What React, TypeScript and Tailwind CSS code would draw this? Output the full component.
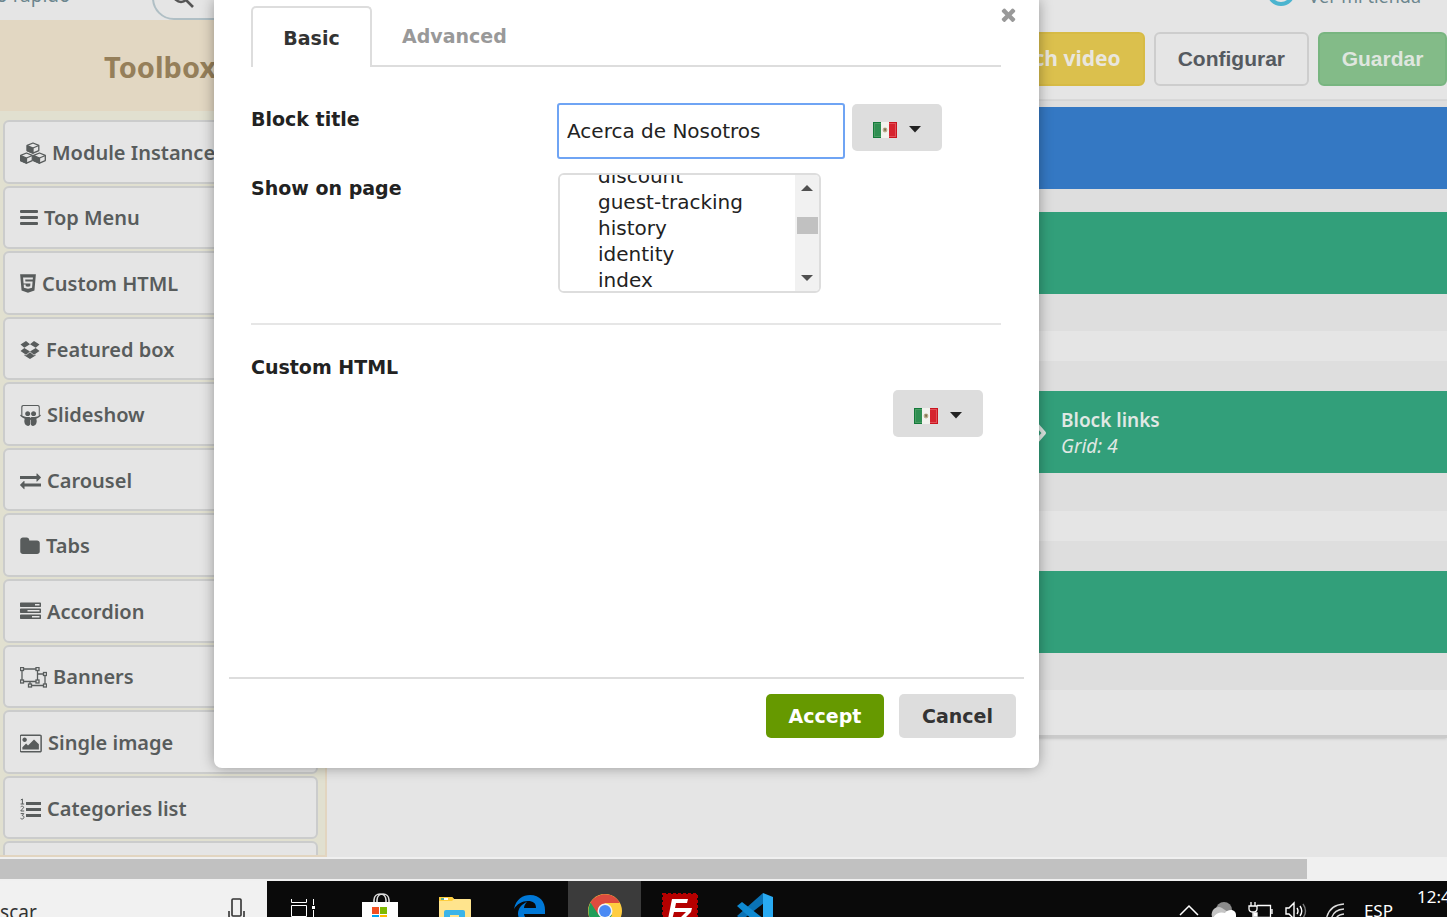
import { useEffect, useRef, type ReactNode } from "react";
import { FaHtml5, FaSlideshare } from "react-icons/fa";

const Cubes = () => (
  <svg width="26" height="22" viewBox="0 0 26 22" fill="none" stroke="currentColor" strokeWidth="1.3" strokeLinejoin="round">
    {[[13, 1], [6.5, 11], [19.5, 11]].map(([x, y]) => (
      <g key={`${x}-${y}`} transform={`translate(${x} ${y})`}>
        <path d="M0 0 5.8 2.4V7.6L0 10.2-5.8 7.6V2.4Z" fill="#e5e5e5" />
        <path d="M-5.8 2.6 0 5V10.2L-5.8 7.6Z" fill="currentColor" />
        <path d="M0 5 5.8 2.5" />
      </g>
    ))}
  </svg>
);

const Bars = () => (
  <svg width="18" height="18" viewBox="0 0 18 18" fill="currentColor">
    <rect y="1" width="18" height="3" rx="1" />
    <rect y="7" width="18" height="3" rx="1" />
    <rect y="13" width="18" height="3" rx="1" />
  </svg>
);

const Dropbox = () => (
  <svg width="20" height="18" viewBox="0 0 20 18" fill="currentColor">
    <path d="M6 0 10 3.3 4.3 6.7.5 3.6ZM14 0 19.5 3.6 15.7 6.7 10 3.3ZM4.3 6.9 10 10.4 6 13.7.5 10.1ZM15.7 6.9 19.5 10.1 14 13.7 10 10.4ZM10 11.2 14 14.5 15.6 13.4V14.6L10 18 4.4 14.6V13.4L6 14.5Z" />
  </svg>
);

const Exchange = () => (
  <svg width="21" height="21" viewBox="0 0 1792 1792" fill="currentColor">
    <path d="M1792 1184v192q0 13-9.5 22.5t-22.5 9.5h-1376v192q0 13-9.5 22.5t-22.5 9.5q-12 0-24-10l-319-320q-9-9-9-22 0-14 9-23l320-320q9-9 23-9 13 0 22.5 9.5t9.5 22.5v192h1376q13 0 22.5 9.5t9.5 22.5zm0-544q0 14-9 23l-320 320q-9 9-23 9-13 0-22.5-9.5t-9.5-22.5v-192h-1376q-13 0-22.5-9.5t-9.5-22.5v-192q0-13 9.5-22.5t22.5-9.5h1376v-192q0-14 9-23t23-9q12 0 24 10l319 319q9 9 9 23z" />
  </svg>
);

const Folder = () => (
  <svg width="20" height="21" viewBox="64 0 1664 1792" fill="currentColor">
    <path d="M1728 608v704q0 92-66 158t-158 66h-1216q-92 0-158-66t-66-158v-960q0-92 66-158t158-66h320q92 0 158 66t66 158v32h672q92 0 158 66t66 158z" />
  </svg>
);

const Tasks = () => (
  <svg width="21" height="21" viewBox="0 0 1792 1792" fill="currentColor">
    <path d="M1024 1408h640v-128h-640v128zm-384-512h1024v-128h-1024v128zm640-512h384v-128h-384v128zm512 832v256q0 26-19 45t-45 19h-1664q-26 0-45-19t-19-45v-256q0-26 19-45t45-19h1664q26 0 45 19t19 45zm0-512v256q0 26-19 45t-45 19h-1664q-26 0-45-19t-19-45v-256q0-26 19-45t45-19h1664q26 0 45 19t19 45zm0-512v256q0 26-19 45t-45 19h-1664q-26 0-45-19t-19-45v-256q0-26 19-45t45-19h1664q26 0 45 19t19 45z" />
  </svg>
);

const ObjectGroup = () => (
  <svg width="27" height="21" viewBox="0 0 27 21" fill="none" stroke="currentColor" strokeWidth="1.3">
    <path d="M2 2H17.5V14.5H2ZM17.5 7H25V18.5H10V14.5" />
    {[[2, 2], [17.5, 2], [2, 14.5], [17.5, 14.5], [25, 7], [25, 18.5], [10, 18.5]].map(([x, y]) => (
      <rect key={`${x}-${y}`} x={x - 1.5} y={y - 1.5} width="3" height="3" fill="#e5e5e5" />
    ))}
  </svg>
);

const Picture = () => (
  <svg width="22" height="21" viewBox="0 0 1856 1792" fill="currentColor">
    <path d="M576 576q0 80-56 136t-136 56-136-56-56-136 56-136 136-56 136 56 56 136zm1024 384v448h-1408v-192l320-320 160 160 512-512zm96-704h-1600q-13 0-22.5 9.5t-9.5 22.5v1216q0 13 9.5 22.5t22.5 9.5h1600q13 0 22.5-9.5t9.5-22.5v-1216q0-13-9.5-22.5t-22.5-9.5zm160 32v1216q0 66-47 113t-113 47h-1600q-66 0-113-47t-47-113v-1216q0-66 47-113t113-47h1600q66 0 113 47t47 113z" />
  </svg>
);

const ListOl = () => (
  <svg width="21" height="22" viewBox="0 0 21 22" fill="currentColor">
    <path d="M6 4h15v3H6zM6 10h15v3H6zM6 16h15v3H6z" />
    <path
      d="M.8 2 2.4 1V6M.6 6H4.2M.7 8.8C1.6 7.8 3.8 8 3.6 9.6 3.4 10.8.9 11.6.8 13H4.2M.7 15.6H3.8L2.2 17.6C4.6 17.6 4.4 21 2.2 21 1.4 21 .9 20.7.5 20.3"
      fill="none"
      stroke="currentColor"
    />
  </svg>
);

const tools: { label: string; icon: ReactNode }[] = [
  { label: "Module Instance", icon: <Cubes /> },
  { label: "Top Menu", icon: <Bars /> },
  { label: "Custom HTML", icon: <FaHtml5 className="-mx-px h-[21px] w-[18px]" /> },
  { label: "Featured box", icon: <Dropbox /> },
  { label: "Slideshow", icon: <FaSlideshare className="size-[21px]" /> },
  { label: "Carousel", icon: <Exchange /> },
  { label: "Tabs", icon: <Folder /> },
  { label: "Accordion", icon: <Tasks /> },
  { label: "Banners", icon: <ObjectGroup /> },
  { label: "Single image", icon: <Picture /> },
  { label: "Categories list", icon: <ListOl /> },
  { label: "Products list", icon: <Bars /> },
];

const pages = [
  "address", "addresses", "authentication", "best-sales", "cart", "category", "cms", "contact", "discount",
  "guest-tracking", "history", "identity", "index", "manufacturer", "my-account", "new-products", "order",
  "order-detail", "pagenotfound", "password", "prices-drop", "product", "search", "sitemap", "stores",
  "supplier",
];

function Header() {
  return (
    <header className="flex h-5 shrink-0 items-end overflow-hidden bg-[#e5e5e5] text-[#6c868e]">
      <div className="flex h-[60px] w-full items-end">
        <div className="flex h-full w-[152px] shrink-0 justify-start">
          <a href="#quick" className="-ml-[54px] mt-[23px] text-[19px] leading-6 whitespace-nowrap">Acceso rápido</a>
        </div>
        <div className="flex h-11 w-[400px] rounded-full border-2 border-[#b0bfc5] pt-2 pl-[18px]">
          <svg width="24" height="24" viewBox="0 0 24 24" fill="none" stroke="#555" strokeWidth="2.6">
            <circle cx="9" cy="9" r="7" />
            <path d="m14 14 7 7" />
          </svg>
        </div>
        <a href="#shop" className="mr-[26px] ml-auto flex h-full items-start gap-3.5">
          <svg width="28" height="28" viewBox="0 0 28 28" className="mt-[18px]">
            <circle cx="14" cy="14" r="12" fill="none" stroke="#4bb4cf" strokeWidth="4" />
          </svg>
          <span className="mt-6 text-[18px] leading-6">Ver mi tienda</span>
        </a>
      </div>
    </header>
  );
}

function Toolbox() {
  return (
    <aside className="flex w-[327px] shrink-0 flex-col overflow-hidden border-r-2 border-b-2 border-[#e2d5c0] bg-[#e1e0d0]">
      <h2 className="flex h-[91px] shrink-0 items-center bg-[#e2d7c2] pl-[104px] text-[29px] font-bold text-[#957f5a]">
        <span className="pt-0.5">Toolbox</span>
      </h2>
      <ul className="mt-[9px] mr-[7px] ml-[3px] grid h-[785px] shrink-0 auto-rows-fr gap-0.5">
        {tools.map((t) => (
          <li key={t.label} className="flex">
            <button className="flex w-full items-center gap-1.5 rounded-md border-2 border-[#cbcccc] bg-[#e5e5e5] pt-0.5 pl-[15px] text-[20px] font-semibold text-[#585c5c]">
              {t.icon}
              <span className="whitespace-nowrap">{t.label}</span>
            </button>
          </li>
        ))}
      </ul>
    </aside>
  );
}

function Canvas() {
  return (
    <main className="flex min-w-0 flex-1 flex-col overflow-hidden bg-[#e5e5e5]">
      <div className="flex h-[81px] shrink-0 items-start justify-end gap-[9px] border-b-2 border-[#d9d9d9] pt-3 text-[21px] font-bold">
        <button className="h-[54px] rounded-md border-2 border-[#d7bb45] bg-[#dbc04d] px-[22px] text-[#e9e6dd]">Watch video</button>
        <button className="h-[54px] rounded-md border-2 border-[#cdcdcd] px-[22px] font-['Liberation_Sans',sans-serif] text-[#555a60]">Configurar</button>
        <button className="h-[54px] w-[129px] rounded-md border-2 border-[#78b580] bg-[#83bb88] font-['Liberation_Sans',sans-serif] text-[#dfe6df]">Guardar</button>
      </div>
      <div className="shrink-0 border-b-3 border-[#cacaca] bg-[#dedede] pt-1.5 shadow-sm">
        <div className="h-[82px] bg-[#3478c3]" />
        <div className="mt-[23px] h-[82px] bg-[#329f7a]" />
        <div className="mt-[37px] h-[30px] bg-[#e5e5e5]" />
        <div className="mt-[30px] flex h-[82px] items-center gap-3.5 bg-[#329f7a] pt-0.5 pl-[696px] text-[#e0e8e4]">
          <svg width="24" height="24" viewBox="0 0 24 24" fill="none" stroke="currentColor" strokeWidth="4" strokeLinecap="round" strokeLinejoin="round" className="shrink-0">
            <path d="M14 4 21 12 14 20" />
          </svg>
          <div className="text-[19px] leading-[26px]">
            <p className="font-semibold">Block links</p>
            <p className="italic">Grid: 4</p>
          </div>
        </div>
        <div className="mt-[38px] h-[30px] bg-[#e5e5e5]" />
        <div className="mt-[30px] h-[82px] bg-[#329f7a]" />
        <div className="mt-[37px] h-[45px] bg-[#e5e5e5]" />
      </div>
    </main>
  );
}

function LanguageButton({ label }: { label: string }) {
  return (
    <button aria-label={label} className="flex h-[47px] w-[90px] items-center justify-center gap-3 rounded-[5px] bg-[#ddd] pt-1">
      <svg width="24" height="16" viewBox="0 0 24 16">
        <rect width="24" height="16" fill="#f2f2ee" />
        <rect width="8" height="16" fill="#137a3a" />
        <rect x="1" y="1" width="7" height="14" fill="#4a9c63" />
        <rect x="2" y="2" width="6" height="12" fill="#2f8f52" />
        <rect x="16" width="8" height="16" fill="#c9141e" />
        <rect x="16" y="1" width="7" height="14" fill="#e05058" />
        <rect x="16" y="2" width="6" height="12" fill="#d6232e" />
        <circle cx="12" cy="8" r="2.4" fill="#b9ac8c" />
        <path d="M11 6.5 12.8 6.6 13 8.6 11.6 9Z" fill="#76694a" />
      </svg>
      <svg width="12" height="7" viewBox="0 0 12 7" fill="#222">
        <path d="M0 0H12L6 6.5Z" />
      </svg>
    </button>
  );
}

function PageSelect() {
  const ref = useRef<HTMLSelectElement>(null);
  useEffect(() => {
    if (ref.current) ref.current.scrollTop = 8 * 26 + 11;
  }, []);
  return (
    <div className="flex h-[120px] w-[263px] overflow-hidden rounded-md border-2 border-[#ddd]">
      <select
        id="show-on"
        ref={ref}
        multiple
        className="h-full min-w-0 flex-1 [scrollbar-width:none] overflow-y-scroll bg-white p-0 text-[20px] text-[#222] outline-none"
      >
        {pages.map((p) => (
          <option key={p} className="h-[26px] p-0 pl-[38px] leading-[26px]">{p}</option>
        ))}
      </select>
      <div aria-hidden="true" className="flex w-6 flex-col items-center justify-between bg-[#f1f1f1] py-2.5">
        <svg width="12" height="6" viewBox="0 0 12 6" fill="#505050"><path d="M0 6H12L6 0Z" /></svg>
        <div className="-mt-4 h-[17px] w-[21px] bg-[#c1c1c1]" />
        <svg width="12" height="6" viewBox="0 0 12 6" fill="#505050"><path d="M0 0H12L6 6Z" /></svg>
      </div>
    </div>
  );
}

function BlockDialog() {
  return (
    <section
      role="dialog"
      aria-label="Block settings"
      className="relative flex h-[768px] w-[825px] flex-col rounded-b-lg bg-white font-['DejaVu_Sans',Verdana,sans-serif] text-[19px] text-[#222] shadow-[0_0_14px_rgba(0,0,0,0.35)]"
    >
      <button aria-label="Close" className="absolute top-[7px] right-[23px] text-[#999]">
        <svg width="15" height="15" viewBox="302 238 1188 1316" fill="currentColor">
          <path d="M1490 1322q0 40-28 68l-136 136q-28 28-68 28t-68-28l-294-294-294 294q-28 28-68 28t-68-28l-136-136q-28-28-28-68t28-68l294-294-294-294q-28-28-28-68t28-68l136-136q28-28 68-28t68 28l294 294 294-294q28-28 68-28t68 28l136 136q28 28 28 68t-28 68l-294 294 294 294q28 28 28 68z" />
        </svg>
      </button>
      <div className="mr-[38px] ml-[37px] flex pt-1.5 font-bold">
        <button className="h-[61px] w-[121px] rounded-t-[5px] border-2 border-b-0 border-[#ddd] pt-0.5 text-[#333]">Basic</button>
        <div className="flex flex-1 border-b-2 border-[#ddd]">
          <button className="px-[30px] pt-0.5 text-[#999]">Advanced</button>
        </div>
      </div>
      <div className="mx-[37px] mt-9 grid grid-cols-[307px_1fr] items-start gap-y-3.5">
        <label htmlFor="title" className="pt-1 leading-6 font-bold">Block title</label>
        <div className="flex gap-[7px]">
          <input
            id="title"
            defaultValue="Acerca de Nosotros"
            className="-ml-px h-14 w-[288px] rounded-[3px] border-2 border-[#6fa4f4] px-2 text-[20px] text-[#222] outline-none"
          />
          <div className="pt-px">
            <LanguageButton label="Title language" />
          </div>
        </div>
        <label htmlFor="show-on" className="pt-[3px] leading-6 font-bold">Show on page</label>
        <PageSelect />
      </div>
      <hr className="mr-[38px] ml-[37px] mt-[30px] border-t-2 border-[#e6e6e6]" />
      <h3 className="mx-[37px] mt-[30px] leading-6 font-bold">Custom HTML</h3>
      <div className="mr-14 mt-[11px] flex justify-end">
        <LanguageButton label="HTML language" />
      </div>
      <footer className="mx-[15px] mt-auto mb-[30px] flex justify-end gap-[15px] border-t-2 border-[#ddd] pt-[15px] pr-2 font-bold">
        <button className="h-11 w-[118px] rounded-[5px] bg-[#690] text-white">Accept</button>
        <button className="h-11 w-[117px] rounded-[5px] bg-[#ddd] text-[#333]">Cancel</button>
      </footer>
    </section>
  );
}

const taskIcons: { name: string; active?: boolean; icon: ReactNode }[] = [
  {
    name: "Task view",
    icon: (
      <svg width="26" height="28" viewBox="0 0 26 28" fill="none" stroke="#fff" className="mr-1">
        <path d="M1.5 2V5.5H16.5V2M1.5 8.5H16.5V19.5H1.5ZM1.5 26V22.5H16.5V26M23.5 2V8M23.5 13V26" />
        <rect x="22" y="9" width="3" height="3" fill="#fff" stroke="none" />
      </svg>
    ),
  },
  {
    name: "Store",
    icon: (
      <svg width="36" height="38" viewBox="0 0 36 38">
        <path d="M12 12V8C12 0 24 0 24 8V12M15 12V8C15 0 27 0 27 8V12" fill="none" stroke="#ddd" strokeWidth="1.6" />
        <path d="M0 10H36V38H0Z" fill="#fff" />
        <path d="M10 15H17V22H10Z" fill="#f25022" />
        <path d="M18 15H25V22H18Z" fill="#7fba00" />
        <path d="M10 23H17V30H10Z" fill="#00a4ef" />
        <path d="M18 23H25V30H18Z" fill="#ffb900" />
      </svg>
    ),
  },
  {
    name: "File Explorer",
    icon: (
      <svg width="32" height="28" viewBox="0 0 32 28">
        <path d="M0 1Q0 0 1 0H13L15 2H31Q32 2 32 3V28H0Z" fill="#ffe48d" />
        <path d="M0 4V1Q0 0 1 0H13L15 2 13 4Z" fill="#ffce3d" />
        <path d="M2 1H9V3H2Z" fill="#fff" />
        <path d="M2 1H5V3H2Z" fill="#5aad9a" />
        <path d="M5 15Q5 13 7 13H24Q26 13 26 15V28H5Z" fill="#3bb4e8" />
        <path d="M11 18H20V21H11Z" fill="#ffe48d" />
      </svg>
    ),
  },
  {
    name: "Edge",
    icon: (
      <svg width="31" height="32" viewBox="0 0 31 32" fill="#0078d7">
        <path d="M0 14C2 4 9 0 16 0 26 0 31 7 31 15V19H10C11 27 22 28 29 24V30C18 35 5 31 4 19 4 13 8 9 13 7 11 9 10 11 10 13H22C22 8 19 6 14 6 8 6 3 9 0 14Z" />
      </svg>
    ),
  },
  {
    name: "Chrome",
    active: true,
    icon: (
      <svg width="34" height="34" viewBox="0 0 34 34">
        <circle cx="17" cy="17" r="17" fill="#ffcd40" />
        <path d="M17 17 24 21 16 34C3 33-3 20 2.5 8.5Z" fill="#1f9d58" />
        <path d="M2.5 8.5C10-3 26-2 31.8 9H17L10 20Z" fill="#dd4b3e" />
        <circle cx="17" cy="17" r="7.5" fill="#f3f3f3" />
        <circle cx="17" cy="17" r="6" fill="#4a8af4" />
      </svg>
    ),
  },
  {
    name: "FileZilla",
    icon: (
      <svg width="36" height="36" viewBox="0 0 36 36">
        <rect x="1" y="1" width="34" height="34" fill="#b50000" stroke="#b50000" strokeWidth="2" strokeDasharray="3 2" />
        <path d="M10 6H26L25 10H14L13 15H22L21 19H12L9 31H5Z" fill="#fff" />
        <path d="M18 15H30L29 19 20 28H28L27 31H15L16 27 24 19H17Z" fill="#fff" />
      </svg>
    ),
  },
  {
    name: "Visual Studio Code",
    icon: (
      <svg width="36" height="36" viewBox="0 0 36 36">
        <path d="M26 0 27 10 5 27 0 23Z" fill="#0a72b5" />
        <path d="M0 13 5 9 27 26 26 36Z" fill="#0f8ad2" />
        <path d="M26 0 36 4V32L26 36Z" fill="#29aaf2" />
      </svg>
    ),
  },
];

function Taskbar() {
  return (
    <nav className="h-9 shrink-0 overflow-hidden bg-[#0a0a0a] text-white">
      <div className="flex h-[60px]">
        <label className="flex w-[267px] shrink-0 items-center justify-between overflow-hidden bg-[#f1f1f1] pr-[22px] text-[#333]">
          <span className="-ml-6 pt-0.5 text-[19px]">Buscar</span>
          <svg width="17" height="26" viewBox="0 0 17 26" fill="none" stroke="#333" strokeWidth="1.6">
            <rect x="4" y="1" width="9" height="17" rx="1" />
            <path d="M1 13V18Q1 21 4 21H13Q16 21 16 18V13M8.5 21V25" />
          </svg>
        </label>
        {taskIcons.map((t) => (
          <div key={t.name} className="flex w-[75px] shrink-0 justify-center">
            <button
              aria-label={t.name}
              className={t.active ? "flex w-[73px] items-center justify-center bg-[#3b3b3b]" : "flex w-[73px] items-center justify-center"}
            >
              {t.icon}
            </button>
          </div>
        ))}
        <div className="ml-auto flex items-center gap-3">
          <svg width="20" height="14" viewBox="0 0 20 14" fill="none" stroke="#fff" strokeWidth="1.5"><path d="M1 11 10 2 19 11" /></svg>
          <svg width="25" height="18" viewBox="0 0 25 18">
            <circle cx="13" cy="8" r="8" fill="#8b8b8b" />
            <path d="M1 15C-1 8 6 3 11 6L20 12 18 17Z" fill="#c4c4c4" />
            <path d="M2 18C2 12 9 9 14 11 18 6 25 8 25 13V18Z" fill="#fff" />
          </svg>
          <svg width="25" height="20" viewBox="0 0 25 20" fill="none" stroke="#fff" strokeWidth="1.3">
            <path d="M9 4.5H22.5V16.5H5V13M24 8V13M3 1V5M7 1V5M1 5H9V8Q9 11 5 11 1 11 1 8ZM5 11V16" />
            <path d="M6 15V12H9V15Z" fill="#fff" />
          </svg>
          <svg width="23" height="20" viewBox="0 0 23 20" fill="none" stroke="#fff" strokeWidth="1.4">
            <path d="M1 7H4L9 2V18L4 13H1ZM12 7Q14 10 12 13M15 5Q18.500 10 15 15" />
            <path d="M18 3Q23 10 18 17" stroke="#777" />
          </svg>
          <svg width="28" height="20" viewBox="0 0 28 20" fill="none" stroke="#ddd" strokeWidth="1.3" className="mr-1">
            <path d="M6 20Q8 4 24 3M11 20Q12 9 24 8M15 20Q16 14 24 13" />
            <path d="M20 20Q21 18 24 18" />
          </svg>
          <span className="text-[17px]">ESP</span>
          <div className="ml-3 w-[30px] overflow-hidden text-[17px] leading-7 whitespace-nowrap">
            <p>12:45</p>
            <p>16/05/2018</p>
          </div>
        </div>
      </div>
    </nav>
  );
}

export default function App() {
  return (
    <div className="flex h-screen flex-col overflow-hidden bg-[#e5e5e5] font-['Noto_Sans',sans-serif]">
      <div className="relative flex min-h-0 flex-1 flex-col overflow-hidden">
        <Header />
        <div className="flex min-h-0 flex-1">
          <Toolbox />
          <Canvas />
        </div>
        <div className="absolute top-0 left-[214px]">
          <BlockDialog />
        </div>
      </div>
      <div aria-hidden="true" className="h-6 shrink-0 border-y-2 border-[#f0f0f0] bg-[#f0f0f0]">
        <div className="h-full w-[90.3%] bg-[#c1c1c1]" />
      </div>
      <Taskbar />
    </div>
  );
}
